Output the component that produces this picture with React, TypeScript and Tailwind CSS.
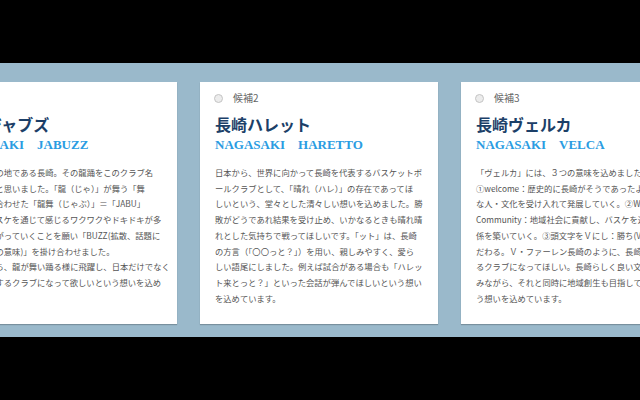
import React from 'react';

interface Candidate {
  id: number;
  label: string;
  name: string;
  roman: string;
  lines: string[];
}

const candidates: Candidate[] = [
  {
    id: 1,
    label: '候補1',
    name: '長崎ジャブズ',
    roman: 'NAGASAKI\u3000JABUZZ',
    lines: [
      '龍踊り発祥の地である長崎。その龍踊をこのクラブ名',
      'に込めたいと思いました。「龍（じゃ）」が舞う「舞',
      'う」を掛け合わせた「龍舞（じゃぶ）」＝「JABU」',
      'さらに、バスケを通じて感じるワクワクやドキドキが多',
      'くの人に広がっていくことを願い「BUZZ(拡散、話題に',
      'なる、などの意味)」を掛け合わせました。',
      '長崎の地から、龍が舞い踊る様に飛躍し、日本だけでなく',
      '世界で活躍するクラブになって欲しいという想いを込め',
      'ました。',
    ],
  },
  {
    id: 2,
    label: '候補2',
    name: '長崎ハレット',
    roman: 'NAGASAKI\u3000HARETTO',
    lines: [
      '日本から、世界に向かって長崎を代表するバスケットボ',
      'ールクラブとして、「晴れ（ハレ）」の存在であってほ',
      'しいという、堂々とした清々しい想いを込めました。勝',
      '敗がどうであれ結果を受け止め、いかなるときも晴れ晴',
      'れとした気持ちで戦ってほしいです。「ット」は、長崎',
      'の方言（「〇〇っと？」）を用い、親しみやすく、愛ら',
      'しい語尾にしました。例えば試合がある場合も「ハレッ',
      'ト来とっと？」といった会話が弾んでほしいという想い',
      'を込めています。',
    ],
  },
  {
    id: 3,
    label: '候補3',
    name: '長崎ヴェルカ',
    roman: 'NAGASAKI\u3000VELCA',
    lines: [
      '「ヴェルカ」には、３つの意味を込めました。',
      '①welcome：歴史的に長崎がそうであったように、様々',
      'な人・文化を受け入れて発展していく。②We are',
      'Community：地域社会に貢献し、バスケを通じて地域と強い関',
      '係を築いていく。③頭文字をＶにし：勝ち(Victory)にこ',
      'だわる。Ｖ・ファーレン長崎のように、長崎で愛され',
      'るクラブになってほしい。長崎らしく良い文化を育',
      'みながら、それと同時に地域創生も目指していくとい',
      'う想いを込めています。',
    ],
  },
];

const CandidateCard: React.FC<{ item: Candidate }> = ({ item }) => (
  <div className="w-[238px] h-[242px] shrink-0 bg-white overflow-hidden pt-[10px] px-[15px] shadow-[0_1px_1px_rgba(0,0,0,0.22)]">
    <label className="flex items-center h-[12px] gap-[10px] -ml-[1px]">
      <span className="w-[9px] h-[9px] rounded-full border border-[#c4c4c4] bg-[#ececec]" />
      <span className="text-[10px] leading-[12px] text-[#666]">{item.label}</span>
    </label>

    <h2 className="mt-[9px] text-[16px] leading-[22px] font-bold text-[#1c3f68] whitespace-nowrap">
      {item.name}
    </h2>
    <p className="mt-[2px] text-[13px] leading-[16px] font-bold text-[#2a9ce2] whitespace-nowrap [font-family:'Liberation_Serif',serif]">
      {item.roman}
    </p>

    <div className="mt-[12px] text-[8.3px] leading-[15.7px] text-[#555]">
      {item.lines.map((line, i) => (
        <div key={i} className="whitespace-nowrap">
          {line}
        </div>
      ))}
    </div>
  </div>
);

export default function App() {
  return (
    <div className="w-[640px] h-[400px] bg-black overflow-hidden flex flex-col [font-family:'Noto_Sans_CJK_JP','Noto_Sans',sans-serif]">
      <div className="h-[63px] shrink-0" />
      <section className="h-[274px] shrink-0 bg-[#9ab9cb] pt-[19px] overflow-hidden">
        <div className="flex gap-[23px] -ml-[61px]">
          {candidates.map(c => (
            <CandidateCard key={c.id} item={c} />
          ))}
        </div>
      </section>
    </div>
  );
}
